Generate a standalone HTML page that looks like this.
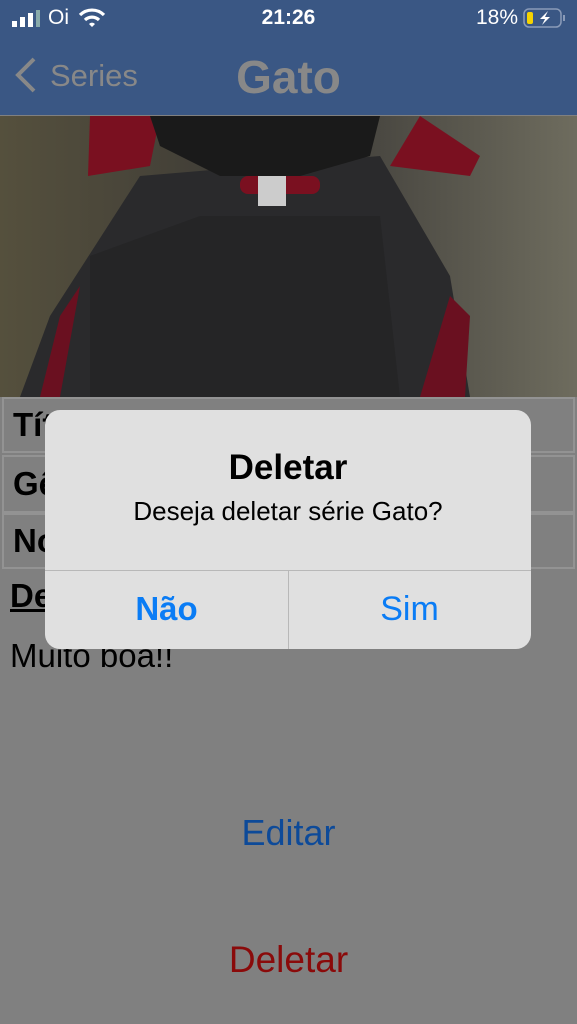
<!DOCTYPE html>
<html><head><meta charset="utf-8"><style>
*{margin:0;padding:0;box-sizing:border-box}
body{width:577px;height:1024px;overflow:hidden;background:#808080;font-family:"Liberation Sans",sans-serif;position:relative}
.nav{position:absolute;left:0;top:0;width:577px;height:115px;background:#3a5784}
.abs{position:absolute}
.row{position:absolute;left:2px;width:573px;background:#808080;border:2px solid #939393;font-weight:bold;font-size:33px;color:#000;padding-left:9px}
</style></head><body>
<div class="nav"></div>
<svg class="abs" style="left:12px;top:10px" width="30" height="18"><rect x="0" y="11" width="5" height="6" fill="#fff"/><rect x="8" y="7" width="5" height="10" fill="#fff"/><rect x="16" y="3" width="5" height="14" fill="#fff"/><rect x="24" y="0" width="4" height="17" fill="#8aa"/></svg>
<div class="abs" style="left:48px;top:6px;color:#fff;font-size:21px">Oi</div>
<svg class="abs" style="left:78px;top:8px" width="28" height="20" viewBox="0 0 28 20"><path d="M2 7 A17 17 0 0 1 26 7" stroke="#fff" stroke-width="3.2" fill="none"/><path d="M7 12 A10 10 0 0 1 21 12" stroke="#fff" stroke-width="3.2" fill="none"/><path d="M11 16 L14 19 L17 16 A4 4 0 0 0 11 16Z" fill="#fff"/></svg>
<div class="abs" style="left:0;width:577px;top:6px;text-align:center;color:#fff;font-size:21px;font-weight:bold">21:26</div>
<div class="abs" style="left:476px;top:6px;color:#fff;font-size:21px">18%</div>
<svg class="abs" style="left:523px;top:8px" width="44" height="20"><rect x="1" y="1" width="37" height="18" rx="5" fill="none" stroke="#8a9bb8" stroke-width="1.5"/><rect x="4" y="4" width="6" height="12" rx="2" fill="#f5d300"/><path d="M25 3 L17 11 H22 L19 17 L27 9 H22Z" fill="#fff"/><rect x="40" y="7" width="2" height="6" fill="#8a9bb8"/></svg>
<svg class="abs" style="left:14px;top:57px" width="24" height="36"><path d="M20 2 L4 18 L20 34" stroke="#888" stroke-width="4" fill="none"/></svg>
<div class="abs" style="left:50px;top:58px;color:#888;font-size:31px">Series</div>
<div class="abs" style="left:0;width:577px;top:50px;text-align:center;color:#888;font-size:46px;font-weight:bold">Gato</div>
<svg class="abs" style="left:0;top:116px" width="577" height="281">
<defs><linearGradient id="bg" x1="0" x2="1"><stop offset="0" stop-color="#55503d"/><stop offset=".5" stop-color="#3a3835"/><stop offset="1" stop-color="#6e6c5e"/></linearGradient></defs>
<rect width="577" height="281" fill="url(#bg)"/>
<path d="M90 0 L88 60 L150 50 L160 0Z" fill="#7a1020"/>
<path d="M420 0 L480 40 L470 60 L390 50Z" fill="#7a1020"/>
<path d="M20 281 L50 200 L140 60 L380 40 L450 160 L470 281Z" fill="#2a2a2c"/>
<path d="M40 281 L60 200 L80 170 L60 281Z" fill="#6a1020"/>
<path d="M420 281 L450 180 L470 200 L465 281Z" fill="#6a1020"/>
<path d="M150 0 L380 0 L370 40 L300 60 L220 60 L160 30Z" fill="#1a1a1a"/>
<rect x="240" y="60" width="80" height="18" rx="8" fill="#7a1020"/>
<rect x="258" y="60" width="28" height="30" fill="#ccc"/>
<path d="M90 140 L200 100 L380 100 L400 281 L90 281Z" fill="#242426" opacity=".8"/>
</svg>
<div class="row" style="top:397px;height:56px;line-height:52px">Título</div>
<div class="row" style="top:455px;height:58px;line-height:54px">Gênero</div>
<div class="row" style="top:513px;height:56px;line-height:52px">Nota</div>
<div class="abs" style="left:10px;top:577px;font-size:33px;font-weight:bold;text-decoration:underline">Descrição</div>
<div class="abs" style="left:10px;top:637px;font-size:33px">Muito boa!!</div>
<div class="abs" style="left:0;width:577px;top:812px;text-align:center;color:#0d4a99;font-size:36px">Editar</div>
<div class="abs" style="left:0;width:577px;top:939px;text-align:center;color:#8a0a0a;font-size:37px">Deletar</div>
<div class="abs" style="left:45px;top:410px;width:486px;height:239px;background:#e0e0e0;border-radius:15px;overflow:hidden">
<div class="abs" style="left:0;width:486px;top:38px;text-align:center;font-size:35px;font-weight:bold">Deletar</div>
<div class="abs" style="left:0;width:486px;top:86px;text-align:center;font-size:26px">Deseja deletar série Gato?</div>
<div class="abs" style="left:0;top:160px;width:486px;height:1px;background:#b8b8b8"></div>
<div class="abs" style="left:243px;top:160px;width:1px;height:80px;background:#b8b8b8"></div>
<div class="abs" style="left:0;width:243px;top:180px;text-align:center;font-size:33px;font-weight:bold;color:#0a7cf5">Não</div>
<div class="abs" style="left:243px;width:243px;top:180px;text-align:center;font-size:34px;color:#0a7cf5">Sim</div>
</div>
</body></html>
